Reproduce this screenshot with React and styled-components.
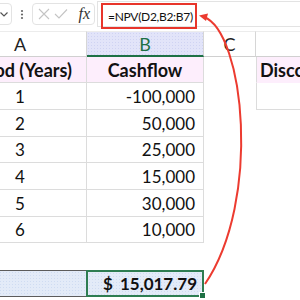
import React from "react";
import styled, { createGlobalStyle } from "styled-components";

const GlobalStyle = createGlobalStyle`
  html, body { margin: 0; padding: 0; background: #fff; }
  body { font-family: "Lato", "Liberation Sans", sans-serif; color: #111; }
`;

const Page = styled.div`
  position: relative;
  width: 300px;
  height: 300px;
  overflow: hidden;
  background: #fff;
`;

const Toolbar = styled.div`
  display: flex;
  align-items: flex-start;
  height: 31px;
  padding-top: 3px;
  box-sizing: border-box;
`;

const NameBox = styled.div`
  width: 40px;
  height: 22px;
  margin-left: -28px;
  border: 1px solid #e3e3e3;
  border-radius: 4px;
  box-sizing: border-box;
  display: flex;
  align-items: center;
  justify-content: flex-end;
  padding-right: 2px;
`;

const Dots = styled.div`
  width: 20px;
  height: 22px;
  display: flex;
  align-items: center;
  justify-content: center;
`;

const FxBox = styled.div`
  width: 63px;
  height: 22px;
  border: 1px solid #e3e3e3;
  border-radius: 4px;
  box-sizing: border-box;
  display: flex;
  align-items: center;
  justify-content: space-between;
  padding: 0 4px 0 5px;
`;

const FxLabel = styled.span`
  font-family: "Liberation Serif", "DejaVu Serif", serif;
  font-style: italic;
  font-size: 16px;
  color: #333;
  line-height: 1;
  margin-left: 6px;
`;

const FormulaBar = styled.div`
  position: relative;
  flex: 1;
  margin-left: 2px;
  margin-top: -2px;
  height: 26px;
  border: 1px solid #e3e3e3;
  border-right: none;
  box-sizing: border-box;
`;

const FormulaHighlight = styled.div`
  position: absolute;
  left: 3px;
  top: 1px;
  width: 96px;
  height: 26px;
  border: 2px solid #e8352b;
  box-sizing: border-box;
  display: flex;
  align-items: center;
  padding-left: 5px;
  font-size: 12px;
  letter-spacing: -0.3px;
  white-space: nowrap;
  color: #111;
`;

const Sheet = styled.div`
  display: grid;
  margin-left: -46px;
  grid-template-columns: 133px 117px 52px 150px;
  grid-template-rows: 26px 26px 27px 27px 26px 27px 27px 26px 27px 27px;
`;

const ColHead = styled.div`
  display: flex;
  align-items: center;
  justify-content: center;
  font-size: 18px;
  color: ${(p) => (p.$active ? "#1e7145" : "#222")};
  background: ${(p) =>
    p.$active
      ? "radial-gradient(circle, #cfd3f3 0.6px, transparent 0.8px) 0 0 / 3px 3px, #e2e4f9"
      : "#fff"};
  border-right: 1px solid #d6d6d6;
  border-bottom: ${(p) => (p.$active ? "2px solid #1e7145" : "1px solid #d0d0d0")};
  border-top: 1px solid #ececec;
  box-sizing: border-box;
`;

const Cell = styled.div`
  display: flex;
  align-items: center;
  justify-content: ${(p) => p.$align || "center"};
  padding: ${(p) => p.$pad || "0"};
  font-size: ${(p) => (p.$bold ? "18px" : "17px")};
  font-weight: ${(p) => (p.$bold ? 700 : 400)};
  white-space: nowrap;
  background: ${(p) => (p.$pink ? "#fdeefc" : "#fff")};
  border-right: ${(p) => (p.$right ? "1px solid #dcdcdc" : "1px solid transparent")};
  border-bottom: ${(p) => (p.$bottom ? "1px solid #dcdcdc" : "1px solid transparent")};
  border-left: ${(p) => (p.$left ? "1px solid #dcdcdc" : "none")};
  box-sizing: border-box;
  overflow: hidden;
`;

const TotalCell = styled.div`
  background: radial-gradient(circle, #cfdcf2 0.6px, transparent 0.8px) 0 0 / 3px 3px, #e3ebf8;
  border-top: 1px solid #5c5c5c;
  border-bottom: 1px solid #5c5c5c;
  box-sizing: border-box;
`;

const ResultCell = styled.div`
  position: relative;
  display: flex;
  align-items: center;
  justify-content: space-between;
  padding: 0 5px 0 15px;
  margin-left: -1px;
  font-size: 17px;
  font-weight: 700;
  background: radial-gradient(circle, #cfdcf2 0.6px, transparent 0.8px) 0 0 / 3px 3px, #e3ebf8;
  border: 2px solid #2e7d52;
  box-sizing: border-box;
`;

const FillHandle = styled.span`
  position: absolute;
  right: -4px;
  bottom: -4px;
  width: 5px;
  height: 5px;
  background: #1e7145;
  border: 1px solid #fff;
`;

const Overlay = styled.svg`
  position: absolute;
  left: 0;
  top: 0;
  pointer-events: none;
`;

const dataRows = [
  ["1", "-100,000"],
  ["2", "50,000"],
  ["3", "25,000"],
  ["4", "15,000"],
  ["5", "30,000"],
  ["6", "10,000"],
];

export default function App() {
  return (
    <Page>
      <GlobalStyle />
      <Toolbar>
        <NameBox>
          <svg width="10" height="10" viewBox="0 0 10 10">
            <path d="M1.5 3.5 L5 7 L8.5 3.5" fill="none" stroke="#555" strokeWidth="1.2" />
          </svg>
        </NameBox>
        <Dots>
          <svg width="4" height="12" viewBox="0 0 4 12">
            <circle cx="2" cy="3" r="1.1" fill="#666" />
            <circle cx="2" cy="6.5" r="1.1" fill="#666" />
            <circle cx="2" cy="10" r="1.1" fill="#666" />
          </svg>
        </Dots>
        <FxBox>
          <svg width="12" height="12" viewBox="0 0 12 12">
            <path d="M1 1 L11 11 M11 1 L1 11" stroke="#c4c4c4" strokeWidth="1.1" />
          </svg>
          <svg width="14" height="12" viewBox="0 0 14 12">
            <path d="M1 6 L5 10 L13 1.5" fill="none" stroke="#c4c4c4" strokeWidth="1.1" />
          </svg>
          <FxLabel>fx</FxLabel>
        </FxBox>
        <FormulaBar>
          <FormulaHighlight>=NPV(D2,B2:B7)</FormulaHighlight>
        </FormulaBar>
      </Toolbar>

      <Sheet>
        <ColHead>A</ColHead>
        <ColHead $active>B</ColHead>
        <ColHead>C</ColHead>
        <ColHead />

        <Cell $pink $bold $right $bottom $align="flex-end" $pad="0 14px 0 0">
          Period (Years)
        </Cell>
        <Cell $pink $bold $right $bottom>Cashflow</Cell>
        <Cell />
        <Cell $pink $bold $left $align="flex-start" $pad="0 0 0 3px">
          Discount Rate
        </Cell>

        {dataRows.map(([p, c], i) => (
          <React.Fragment key={p}>
            <Cell $right $bottom>{p}</Cell>
            <Cell $right $bottom $align="flex-end" $pad="0 8px 0 0">{c}</Cell>
            <Cell />
            {i === 0 ? <Cell $left $bottom /> : <Cell />}
          </React.Fragment>
        ))}

        <Cell />
        <Cell />
        <Cell />
        <Cell />

        <TotalCell />
        <ResultCell>
          <span>$</span>
          <span>15,017.79</span>
          <FillHandle />
        </ResultCell>
        <Cell />
        <Cell />
      </Sheet>

      <Overlay width="300" height="300" viewBox="0 0 300 300">
        <path
          d="M204 17 C 244 32, 262 200, 205 284"
          fill="none"
          stroke="#ec3b30"
          strokeWidth="2"
        />
        <path d="M199 15.5 L208 13.5 L206 21 Z" fill="#ec3b30" />
      </Overlay>
    </Page>
  );
}
